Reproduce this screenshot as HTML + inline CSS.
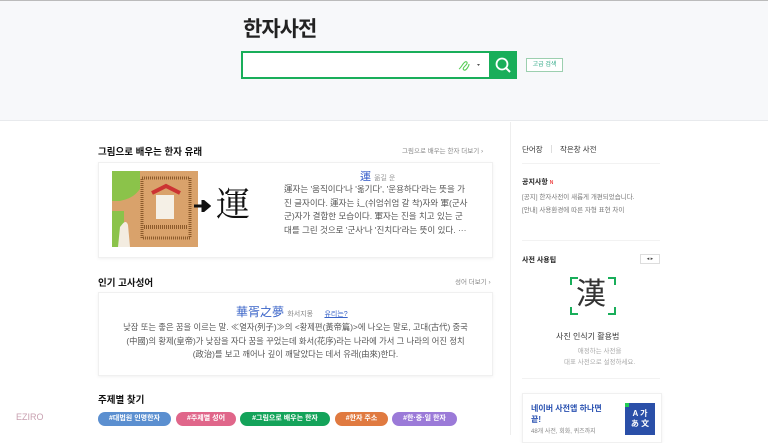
<!DOCTYPE html>
<html><head><meta charset="utf-8"><style>
*{margin:0;padding:0;box-sizing:border-box}
body{width:768px;height:435px;overflow:hidden;background:#fff;font-family:"Liberation Sans","Noto Sans CJK KR",sans-serif;color:#222;position:relative}
.a{position:absolute;white-space:nowrap}
.hdr{position:absolute;left:0;top:0;width:768px;height:121px;background:#f7f8fa;border-bottom:1px solid #e8eaed}
.h{font-size:9.5px;font-weight:bold;color:#111}
.card{position:absolute;border:1px solid #f0f0f0;box-shadow:0 1px 3px rgba(0,0,0,.06);background:#fff}
.tag{position:absolute;top:412px;height:14px;border-radius:7px;color:#fff;font-size:7px;font-weight:bold;line-height:14px;text-align:center}
</style></head><body>
<div class="hdr"></div>
<div style="position:absolute;left:0;top:0;width:768px;height:1px;background:#bbb"></div>
<div class="a" style="left:243px;top:13px;font-size:21px;font-weight:bold;color:#222;letter-spacing:-1px">한자사전</div>
<div style="position:absolute;left:241px;top:51px;width:250px;height:28px;border:2px solid #19ae5a;background:#fff"></div>
<svg class="a" style="left:456px;top:58px" width="30" height="14" viewBox="0 0 30 14"><path d="M3 11c2-1 4-6 6-7s3 1 1 3-4 4-2 5 5-4 5-6" fill="none" stroke="#5c5" stroke-width="1.1"/><path d="M21 6l3 0-1.5 2z" fill="#555"/></svg>
<div style="position:absolute;left:489px;top:51px;width:28px;height:28px;background:#19ae5a"></div>
<svg class="a" style="left:494px;top:56px" width="18" height="18" viewBox="0 0 18 18"><circle cx="8" cy="8" r="5.5" fill="none" stroke="#fff" stroke-width="1.8"/><path d="M12 12l4 4" stroke="#fff" stroke-width="2"/></svg>
<div class="a" style="left:526px;top:58px;width:37px;height:14px;border:1px solid #9ccfaf;background:#fff;font-size:6px;color:#3a8;text-align:center;line-height:12px">고급 검색</div>

<div style="position:absolute;left:510px;top:122px;width:1px;height:313px;background:#eee"></div>

<div class="a h" style="left:98px;top:144px">그림으로 배우는 한자 유래</div>
<div class="a" style="left:402px;top:145px;font-size:6.5px;color:#888">그림으로 배우는 한자 더보기 ›</div>
<div class="card" style="left:98px;top:162px;width:395px;height:96px"></div>
<svg class="a" style="left:112px;top:171px" width="86" height="76" viewBox="0 0 86 76"><rect width="86" height="76" fill="#d9a26b"/><path d="M0 0h28v18c-6 8-12 10-20 12H0z" fill="#8bc34a"/><path d="M0 40h12v36H0z" fill="#8bc34a"/><path d="M8 56c3-4 6-8 8-2l2 22H6z" fill="#f3ece0"/><rect x="30" y="7" width="48" height="60" fill="none" stroke="#8b5a2b" stroke-width="3" stroke-dasharray="1 1"/><path d="M40 22l14-7 14 7" fill="none" stroke="#c33" stroke-width="4"/><rect x="44" y="24" width="18" height="24" fill="#f5f0e6"/><path d="M32 56h44" stroke="#8b5a2b" stroke-width="4" stroke-dasharray="1 1"/></svg>
<svg class="a" style="left:193px;top:200px" width="18" height="12" viewBox="0 0 18 12"><path d="M1 6h11M10 1l6 5-6 5z" stroke="#111" stroke-width="3" fill="#111"/></svg>
<div class="a" style="left:216px;top:182px;font-size:34px;color:#111;font-family:'Noto Serif CJK SC',serif;line-height:40px">運</div>
<div class="a" style="left:360px;top:168px;font-size:11px"><span style="color:#3058c8">運</span> <span style="font-size:7px;color:#999">옮길 운</span></div>
<div class="a" style="left:284px;top:183px;font-size:8.5px;color:#555;line-height:13.5px">運자는 '움직이다'나 '옮기다', '운용하다'라는 뜻을 가<br>진 글자이다. 運자는 辶(쉬엄쉬엄 갈 착)자와 軍(군사<br>군)자가 결합한 모습이다. 軍자는 진을 치고 있는 군<br>대를 그린 것으로 '군사'나 '진치다'라는 뜻이 있다. ···</div>

<div class="a h" style="left:98px;top:275px">인기 고사성어</div>
<div class="a" style="left:455px;top:276px;font-size:6.5px;color:#888">성어 더보기 ›</div>
<div class="card" style="left:98px;top:292px;width:395px;height:84px"></div>
<div class="a" style="left:236px;top:303px;font-size:12px;color:#3a64c8">華胥之夢 <span style="font-size:7px;color:#888">화서지몽</span> <span style="font-size:7px;color:#3a64c8;text-decoration:underline;margin-left:8px">유리는?</span></div>
<div class="a" style="left:98px;top:321px;width:395px;font-size:8.3px;color:#555;line-height:13.5px;text-align:center">낮잠 또는 좋은 꿈을 이르는 말. ≪열자(列子)≫의 &lt;황제편(黃帝篇)&gt;에 나오는 말로, 고대(古代) 중국<br>(中國)의 황제(皇帝)가 낮잠을 자다 꿈을 꾸었는데 화서(花序)라는 나라에 가서 그 나라의 어진 정치<br>(政治)를 보고 깨어나 깊이 깨달았다는 데서 유래(由來)한다.</div>

<div class="a h" style="left:98px;top:392px">주제별 찾기</div>
<div class="tag" style="left:98px;width:73px;background:#5b8fd0">#대법원 인명한자</div>
<div class="tag" style="left:176px;width:60px;background:#e0668a">#주제별 성어</div>
<div class="tag" style="left:240px;width:90px;background:#14a35a">#그림으로 배우는 한자</div>
<div class="tag" style="left:335px;width:53px;background:#e07a40">#한자 주소</div>
<div class="tag" style="left:392px;width:65px;background:#9b7ad8">#한·중·일 한자</div>
<div class="a" style="left:16px;top:412px;font-size:9px;color:#c8a0b0">EZIRO</div>

<div class="a" style="left:522px;top:144px;font-size:7.5px;color:#333">단어장</div>
<div style="position:absolute;left:551px;top:145px;width:1px;height:8px;background:#ddd"></div>
<div class="a" style="left:560px;top:144px;font-size:7.5px;color:#333">작은창 사전</div>
<div style="position:absolute;left:522px;top:163px;width:138px;height:1px;background:#f2f2f2"></div>
<div class="a" style="left:522px;top:177px;font-size:7px;font-weight:bold">공지사항 <span style="color:#e44;font-size:5px">N</span></div>
<div class="a" style="left:522px;top:191px;font-size:6.5px;color:#777;line-height:13px">[공지] 한자사전이 새롭게 개편되었습니다.<br>[안내] 사용환경에 따른 자형 표현 차이</div>
<div style="position:absolute;left:522px;top:240px;width:138px;height:1px;background:#f2f2f2"></div>
<div class="a" style="left:522px;top:255px;font-size:7px;font-weight:bold">사전 사용팁</div>
<div class="a" style="left:640px;top:254px;width:20px;height:10px;border:1px solid #ddd;font-size:5px;line-height:8px;color:#444;text-align:center">◂ ▸</div>
<svg class="a" style="left:570px;top:277px" width="46" height="38" viewBox="0 0 46 38"><path d="M1 8V1h7M38 1h7v7M45 30v7h-7M8 37H1v-7" fill="none" stroke="#19ae5a" stroke-width="2"/></svg>
<div class="a" style="left:576px;top:276px;font-size:30px;color:#333;line-height:38px">漢</div>
<div class="a" style="left:556px;top:331px;font-size:8px;color:#333">사진 인식기 활용법</div>
<div class="a" style="left:564px;top:346px;font-size:6.5px;color:#aaa;line-height:11px;text-align:center">애정하는 사전을<br>대표 사전으로 설정하세요.</div>
<div style="position:absolute;left:522px;top:378px;width:138px;height:1px;background:#f2f2f2"></div>
<div class="card" style="left:522px;top:393px;width:140px;height:50px"></div>
<div class="a" style="left:531px;top:403px;font-size:8px;color:#2850b0;font-weight:bold;line-height:11px">네이버 사전앱 하나면<br>끝!</div>
<div class="a" style="left:531px;top:426px;font-size:6px;color:#888">48개 사전, 회화, 퀴즈까지</div>
<div class="a" style="left:625px;top:403px;width:30px;height:32px;background:#2a4fa8;color:#fff;font-size:8px;font-weight:bold;line-height:10px;text-align:center;padding-top:6px">A 가<br>あ 文</div>
<div class="a" style="left:625px;top:403px;width:4px;height:4px;background:#2c5"></div>
</body></html>
